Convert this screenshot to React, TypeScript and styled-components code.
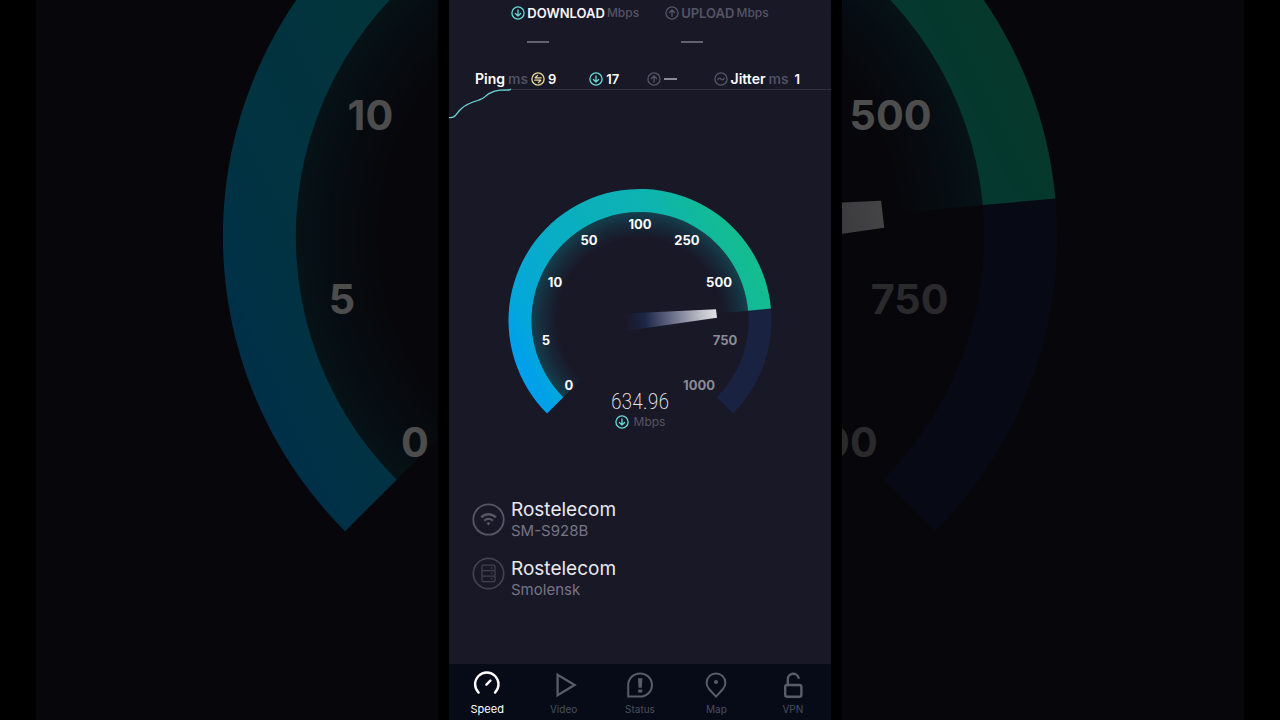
import React, { useId } from "react";
import styled, { createGlobalStyle } from "styled-components";

const GlobalStyle = createGlobalStyle`
  * { box-sizing: border-box; }
  body {
    margin: 0;
    background: #000;
    font-family: Inter, "Open Sans", sans-serif;
    color: #fff;
  }
`;

const color = {
  panel: "#191827",
  nav: "#070b17",
  muted: "#555564",
  soft: "#757584",
  white: "#f7f7fa",
  cyan: "#69d8d6",
  yellow: "#e9dc98",
  line: "#30303e",
};

const Stage = styled.div`
  position: relative;
  display: flex;
  justify-content: center;
  min-height: 100vh;
  overflow: hidden;
`;

const Backdrop = styled.div`
  position: absolute;
  inset: 0 36px;
  background: ${color.panel};
  opacity: 0.3;
`;

const BackdropGauge = styled.svg`
  display: block;
  width: 100%;
  height: 100%;
`;

const Frame = styled.div`
  position: relative;
  display: flex;
  width: 100%;
  max-width: 404px;
  padding: 0 11px;
  background: #000;
`;

const Phone = styled.main`
  flex: 1;
  min-width: 0;
  display: flex;
  flex-direction: column;
  background: ${color.panel};
`;

const Totals = styled.header`
  display: flex;
  justify-content: center;
  gap: 26px;
  padding-top: 4px;
`;

const Total = styled.section`
  display: flex;
  flex-direction: column;
  gap: 19px;
`;

const TotalLabel = styled.div<{ $active?: boolean }>`
  display: flex;
  align-items: center;
  gap: 2px;
  font-size: 13px;
  line-height: 18px;
  font-weight: 600;
  color: ${(p) => (p.$active ? color.white : color.muted)};
`;

const Unit = styled.span`
  font-weight: 500;
  color: ${color.muted};
`;

const TotalUnit = styled(Unit)`
  font-size: 12px;
`;

const Dash = styled.span<{ $wide?: boolean }>`
  width: ${(p) => (p.$wide ? "22px" : "13px")};
  height: 2px;
  margin-left: ${(p) => (p.$wide ? "16px" : "0")};
  background: ${(p) => (p.$wide ? "#62626f" : "#8b8b96")};
`;

const Latency = styled.section`
  display: grid;
  grid-template-columns: 115fr 58fr 67fr 85fr;
  padding: 27px 31px 0 26px;
`;

const LatencyItem = styled.div`
  display: flex;
  align-items: center;
  gap: 3px;
  font-size: 14px;
  line-height: 18px;
  font-weight: 600;
  white-space: nowrap;
`;

const Jitter = styled(LatencyItem)`
  justify-content: flex-end;
`;

const Value = styled.span<{ $spaced?: boolean }>`
  font-size: 13px;
  padding-left: ${(p) => (p.$spaced ? "3px" : "0")};
`;

const Graph = styled.svg`
  display: block;
  width: 100%;
  height: auto;
`;

const GaugeArea = styled.section`
  display: grid;
  margin-top: 64px;
`;

const GaugeSvg = styled.svg`
  grid-area: 1 / 1;
  display: block;
  width: 100%;
  height: auto;
`;

const Readout = styled.div`
  grid-area: 1 / 1;
  align-self: end;
  justify-self: center;
  display: flex;
  flex-direction: column;
  align-items: center;
`;

const Speed = styled.output`
  font-family: "Roboto Condensed", "Open Sans Condensed", Roboto, sans-serif;
  font-size: 22px;
  line-height: 24px;
  font-weight: 200;
  color: #f0f0f6;
`;

const SpeedUnit = styled.div`
  display: flex;
  align-items: center;
  gap: 5px;
  font-size: 12px;
  line-height: 16px;
  color: ${color.muted};
`;

const Providers = styled.ul`
  list-style: none;
  display: flex;
  flex-direction: column;
  gap: 16px;
  margin: 68px 0 0;
  padding: 0 23px;
`;

const Provider = styled.li<{ $align: string }>`
  display: flex;
  align-items: ${(p) => p.$align};
  gap: 6px;
`;

const ProviderName = styled.div`
  font-size: 19px;
  line-height: 23px;
  color: #e9e9ef;
`;

const ProviderDetail = styled.div`
  font-size: 15px;
  line-height: 20px;
  color: ${color.soft};
`;

const Nav = styled.nav`
  display: grid;
  grid-template-columns: repeat(5, 1fr);
  height: 56px;
  margin-top: auto;
  background: ${color.nav};
`;

const NavIcon = styled.svg`
  color: #595c69;
`;

const NavButton = styled.button<{ $active?: boolean }>`
  display: flex;
  flex-direction: column;
  align-items: center;
  gap: 2px;
  padding: 6px 0 0;
  border: 0;
  background: none;
  font-family: inherit;
  font-size: ${(p) => (p.$active ? "11px" : "10px")};
  line-height: 14px;
  color: ${(p) => (p.$active ? "#fff" : "#4b4e5c")};
  cursor: pointer;

  ${NavIcon} {
    ${(p) => (p.$active ? "color: #fff;" : "")}
  }
`;

const CX = 191;
const CY = 320.5;
const OUTER = 131.5;
const INNER = 108.5;
const VALUE_ANGLE = -5.2;

const point = (r: number, deg: number) => {
  const a = (deg * Math.PI) / 180;
  return `${(CX + r * Math.cos(a)).toFixed(2)} ${(CY + r * Math.sin(a)).toFixed(2)}`;
};

const band = (r1: number, r2: number, from: number, to: number) => {
  const large = to - from > 180 ? 1 : 0;
  return `M${point(r1, from)} A${r1} ${r1} 0 ${large} 1 ${point(r1, to)} L${point(r2, to)} A${r2} ${r2} 0 ${large} 0 ${point(r2, from)} Z`;
};

type Tick = { label: string; x: number; y: number; dim?: boolean };

const sideTicks: Tick[] = [
  { label: "0", x: 120, y: 390 },
  { label: "5", x: 97, y: 345 },
  { label: "10", x: 106, y: 287 },
  { label: "500", x: 270, y: 287 },
  { label: "750", x: 276, y: 345, dim: true },
  { label: "1000", x: 250, y: 390, dim: true },
];

const allTicks: Tick[] = [
  ...sideTicks,
  { label: "50", x: 140, y: 245 },
  { label: "100", x: 191, y: 229 },
  { label: "250", x: 238, y: 245 },
];

function Gauge({ ticks }: { ticks: Tick[] }) {
  const id = useId();
  return (
    <g>
      <defs>
        <linearGradient id={`${id}-band`} gradientUnits="userSpaceOnUse" x1="98" y1="413" x2="323" y2="301">
          <stop offset="0" stopColor="#00a0ec" />
          <stop offset="0.08" stopColor="#04a7db" />
          <stop offset="0.33" stopColor="#09adc4" />
          <stop offset="0.74" stopColor="#0db4b0" />
          <stop offset="0.96" stopColor="#13bb94" />
          <stop offset="1" stopColor="#14bc90" />
        </linearGradient>
        <radialGradient id={`${id}-glow`} gradientUnits="userSpaceOnUse" cx={CX} cy={CY} r={INNER}>
          <stop offset="0.76" stopColor="#0b7388" stopOpacity="0" />
          <stop offset="0.88" stopColor="#0b7388" stopOpacity="0.18" />
          <stop offset="1" stopColor="#0d8088" stopOpacity="0.38" />
        </radialGradient>
        <linearGradient id={`${id}-needle`} gradientUnits="userSpaceOnUse" x1="176" y1="322" x2="268" y2="313">
          <stop offset="0" stopColor="#1b2444" stopOpacity="0" />
          <stop offset="0.22" stopColor="#1c2748" />
          <stop offset="0.5" stopColor="#666b86" />
          <stop offset="0.8" stopColor="#b9b9c4" />
          <stop offset="1" stopColor="#e3e2e6" />
        </linearGradient>
      </defs>
      <path d={band(OUTER, INNER, VALUE_ANGLE, 45)} fill="#1a2242" />
      <path d={band(INNER, 70, -225, VALUE_ANGLE)} fill={`url(#${id}-glow)`} />
      <path d={band(OUTER, INNER, -225, VALUE_ANGLE)} fill={`url(#${id}-band)`} />
      <path d="M176 313.5 L267 309.3 L268 317.8 L176 331 Z" fill={`url(#${id}-needle)`} />
      {ticks.map((t) => (
        <text
          key={t.label}
          x={t.x}
          y={t.y}
          textAnchor="middle"
          fontSize="13"
          fontWeight="700"
          fill={t.dim ? "#8b8b96" : "#fff"}
        >
          {t.label}
        </text>
      ))}
    </g>
  );
}

function RoundIcon({ kind, tint }: { kind: "down" | "up" | "swap" | "wave"; tint: string }) {
  const marks = {
    down: "M7 3.8V10M4.4 7.5L7 10.1L9.6 7.5",
    up: "M7 10.2V4M4.4 6.5L7 3.9L9.6 6.5",
    swap: "M10.2 5.8H4.2L6.6 3.4M3.8 8.2H9.8L7.4 10.6",
    wave: "M3.8 7.8C4.8 5.6 6 5.8 7 7C8 8.2 9.2 8.4 10.2 6.2",
  };
  return (
    <svg width="14" height="14" viewBox="0 0 14 14" fill="none" stroke={tint} strokeWidth="1.3" aria-hidden="true">
      <circle cx="7" cy="7" r="6.1" />
      <path d={marks[kind]} strokeLinecap="round" strokeLinejoin="round" />
    </svg>
  );
}

function WifiBadge() {
  return (
    <svg width="33" height="33" viewBox="0 0 33 33" fill="none" stroke="#565664" aria-hidden="true">
      <circle cx="16.5" cy="16.5" r="15.2" strokeWidth="1.8" />
      <path d="M9.2 14.4C13.2 10.2 19.8 10.2 23.8 14.4M12.2 17.7C14.6 15.3 18.4 15.3 20.8 17.7" strokeWidth="2.3" />
      <path d="M14.4 20C15.6 19 17.4 19 18.6 20L16.5 22.4Z" fill="#565664" stroke="none" />
    </svg>
  );
}

function ServerBadge() {
  return (
    <svg width="33" height="33" viewBox="0 0 33 33" fill="none" stroke="#414150" aria-hidden="true">
      <circle cx="16.5" cy="16.5" r="15.2" strokeWidth="1.7" />
      <rect x="10" y="8.2" width="13" height="16.4" rx="1.2" strokeWidth="1.3" />
      <path d="M10 13.6H23M10 19.1H23M18.8 11H20.6M18.8 16.4H20.6M18.8 21.9H20.6" strokeWidth="1.3" />
    </svg>
  );
}

const navItems = [
  {
    label: "Speed",
    active: true,
    icon: (
      <>
        <path d="M6.6 22.6A11.7 11.7 0 1 1 23 22.6" strokeWidth="2.4" strokeLinecap="round" />
        <path d="M14.4 14.6L18.4 10.6" strokeWidth="2.4" strokeLinecap="round" />
      </>
    ),
  },
  { label: "Video", icon: <path d="M8.6 4.8V25.2L25.6 15Z" strokeWidth="2.3" /> },
  {
    label: "Status",
    icon: (
      <>
        <path d="M3.2 26.6V15A11.9 11.6 0 1 1 15.1 26.6Z" strokeWidth="2" />
        <path d="M13 8.2H17.4L16.8 17.8H13.6ZM13.2 19.4H17.2V22.4H13.2Z" fill="currentColor" stroke="none" />
      </>
    ),
  },
  {
    label: "Map",
    icon: (
      <>
        <path d="M15 26.6L8 19C6.4 17 5.6 15 5.6 12.8A9.4 9.4 0 0 1 24.4 12.8C24.4 15 23.6 17 22 19Z" strokeWidth="2" />
        <circle cx="15" cy="12" r="2" fill="currentColor" stroke="none" />
      </>
    ),
  },
  {
    label: "VPN",
    icon: (
      <>
        <rect x="7.2" y="15" width="16.2" height="11.8" rx="2" strokeWidth="2.4" />
        <path d="M9.8 15V9.2A5.5 5.5 0 0 1 20.6 7.8" strokeWidth="2.4" strokeLinecap="round" />
      </>
    ),
  },
];

export default function App() {
  return (
    <>
      <GlobalStyle />
      <Stage>
        <Backdrop aria-hidden="true">
          <BackdropGauge viewBox="0 246 382 227" preserveAspectRatio="xMidYMid slice">
            <Gauge ticks={sideTicks} />
          </BackdropGauge>
        </Backdrop>
        <Frame>
          <Phone>
            <Totals>
              <Total>
                <TotalLabel $active>
                  <RoundIcon kind="down" tint={color.cyan} />
                  DOWNLOAD <TotalUnit>Mbps</TotalUnit>
                </TotalLabel>
                <Dash $wide />
              </Total>
              <Total>
                <TotalLabel>
                  <RoundIcon kind="up" tint={color.muted} />
                  UPLOAD <TotalUnit>Mbps</TotalUnit>
                </TotalLabel>
                <Dash $wide />
              </Total>
            </Totals>
            <Latency>
              <LatencyItem>
                Ping <Unit>ms</Unit>
                <RoundIcon kind="swap" tint={color.yellow} />
                <Value>9</Value>
              </LatencyItem>
              <LatencyItem>
                <RoundIcon kind="down" tint={color.cyan} />
                <Value>17</Value>
              </LatencyItem>
              <LatencyItem>
                <RoundIcon kind="up" tint={color.muted} />
                <Dash />
              </LatencyItem>
              <Jitter>
                <RoundIcon kind="wave" tint={color.muted} />
                Jitter <Unit>ms</Unit>
                <Value $spaced>1</Value>
              </Jitter>
            </Latency>
            <Graph viewBox="0 0 382 32" fill="none" aria-hidden="true">
              <path d="M62 1.5H382" stroke={color.line} />
              <path
                d="M0 29.6C7 30.3 7 25 12 21C17 16 23 14 30 12C35 11 36 8 40 5.6C44 3.4 46 2.4 51 2.2L60 2L62 1.2"
                stroke={color.cyan}
                strokeWidth="1.3"
              />
            </Graph>
            <GaugeArea>
              <GaugeSvg viewBox="0 184 382 246" role="img" aria-label="Download speed 634.96 Mbps">
                <Gauge ticks={allTicks} />
              </GaugeSvg>
              <Readout>
                <Speed>634.96</Speed>
                <SpeedUnit>
                  <RoundIcon kind="down" tint={color.cyan} />
                  Mbps
                </SpeedUnit>
              </Readout>
            </GaugeArea>
            <Providers>
              <Provider $align="center">
                <WifiBadge />
                <div>
                  <ProviderName>Rostelecom</ProviderName>
                  <ProviderDetail>SM-S928B</ProviderDetail>
                </div>
              </Provider>
              <Provider $align="flex-start">
                <ServerBadge />
                <div>
                  <ProviderName>Rostelecom</ProviderName>
                  <ProviderDetail>Smolensk</ProviderDetail>
                </div>
              </Provider>
            </Providers>
            <Nav>
              {navItems.map((item) => (
                <NavButton key={item.label} type="button" $active={item.active}>
                  <NavIcon width="30" height="30" viewBox="0 0 30 30" fill="none" stroke="currentColor" aria-hidden="true">
                    {item.icon}
                  </NavIcon>
                  {item.label}
                </NavButton>
              ))}
            </Nav>
          </Phone>
        </Frame>
      </Stage>
    </>
  );
}
